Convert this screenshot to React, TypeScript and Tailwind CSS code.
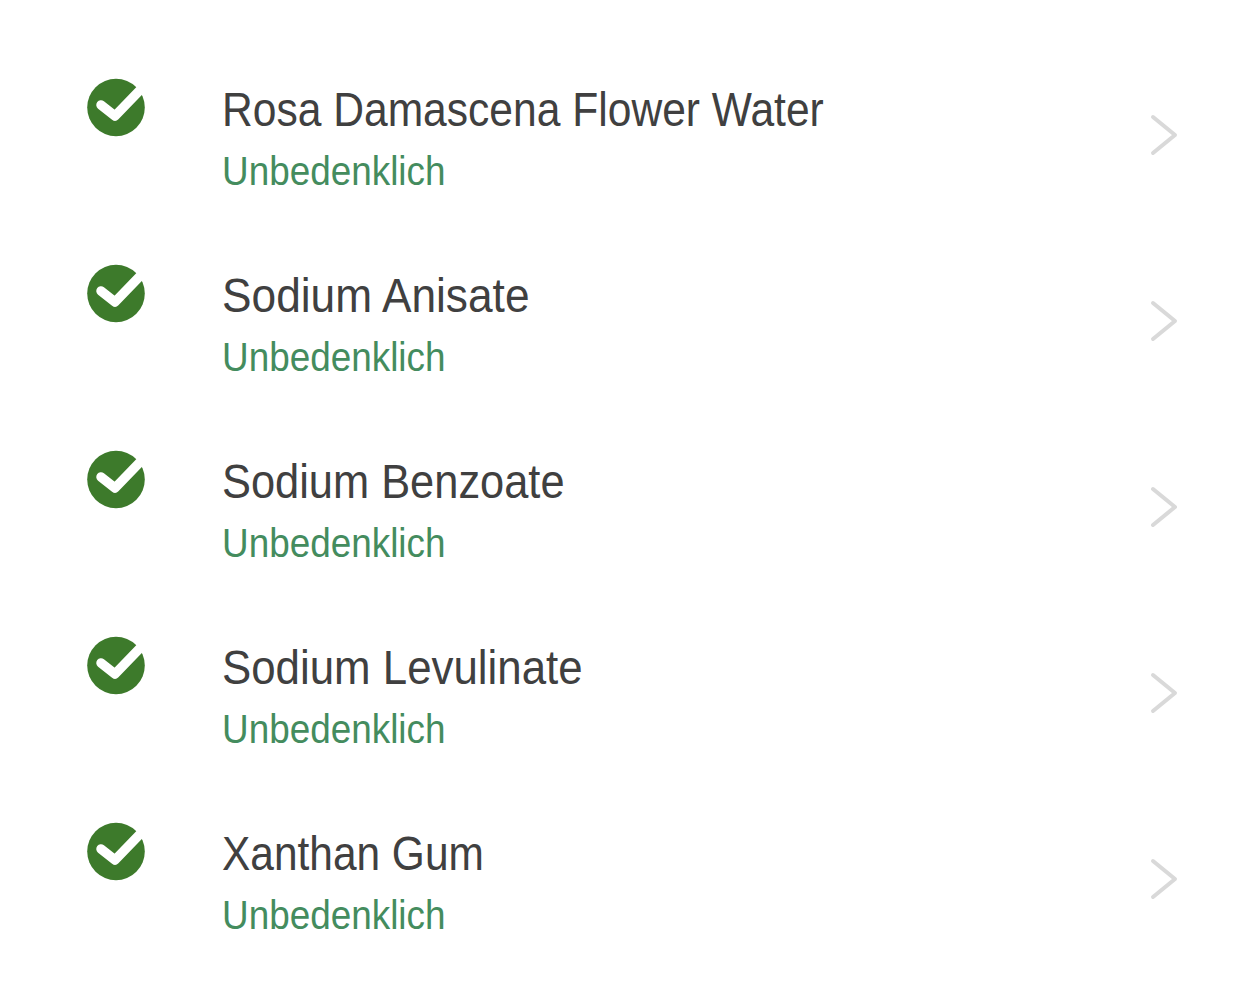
const rows = [
  { name: 'Rosa Damascena Flower Water', width: 'scale-x-[0.887]' },
  { name: 'Sodium Anisate', width: 'scale-x-[0.922]' },
  { name: 'Sodium Benzoate', width: 'scale-x-[0.904]' },
  { name: 'Sodium Levulinate', width: 'scale-x-[0.913]' },
  { name: 'Xanthan Gum', width: 'scale-x-[0.884]' },
]

function CheckBadge() {
  return (
    <svg width="60" height="58" viewBox="0 0 60 58" className="block shrink-0 overflow-visible">
      <circle cx="29" cy="28.5" r="28.8" fill="#3d7a2b" />
      <path d="M14 26 L28 37 L56 8" fill="none" stroke="#fff" strokeWidth="9.5" strokeLinecap="round" strokeLinejoin="round" />
    </svg>
  )
}

function Chevron() {
  return (
    <svg width="28" height="42" viewBox="0 0 28 42" className="block">
      <path d="M3 3 L25 21 L3 39" fill="none" stroke="#d9d9d9" strokeWidth="4" strokeLinecap="round" strokeLinejoin="round" />
    </svg>
  )
}

export default function App() {
  return (
    <div className="flex h-[996px] w-full flex-col bg-white pt-[79px] pl-[87px] pr-[64px] font-['Liberation_Sans',sans-serif]">
      {rows.map((row) => (
        <div key={row.name} className="flex h-[186px] shrink-0 items-start">
          <div className="w-[58px] shrink-0">
            <CheckBadge />
          </div>
          <div className="ml-[77px] flex-1 pt-px">
            <div className={`origin-left text-[48px] leading-[60px] whitespace-nowrap text-[#404040] ${row.width}`}>{row.name}</div>
            <div className="mt-[7px] origin-left scale-x-[0.922] text-[40px] leading-[48px] text-[#448c5e]">Unbedenklich</div>
          </div>
          <div className="mt-[35px]">
            <Chevron />
          </div>
        </div>
      ))}
    </div>
  )
}
